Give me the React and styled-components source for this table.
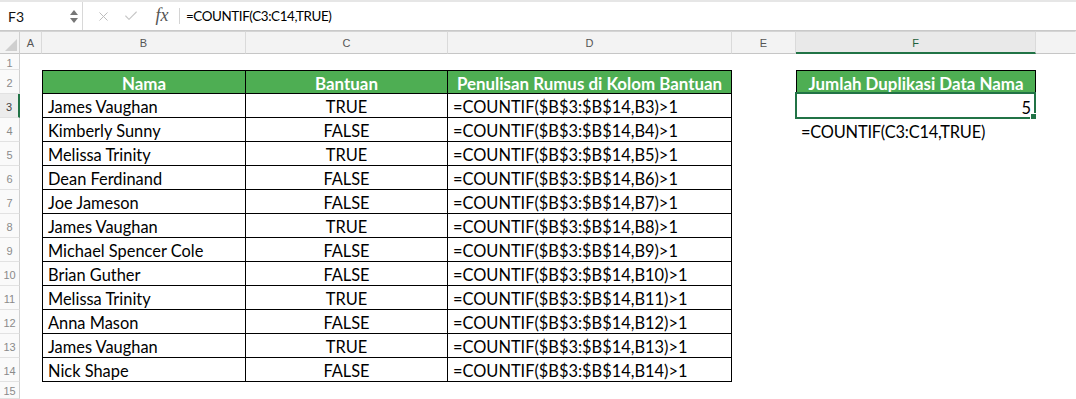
import React from "react";
import styled, { createGlobalStyle, css } from "styled-components";
import { X, Check } from "lucide-react";

const Global = createGlobalStyle`
  html, body { margin: 0; padding: 0; background: #fff; }
  body { font-family: Lato, "Liberation Sans", sans-serif; overflow: hidden; }
  * { box-sizing: border-box; }
`;

const Page = styled.div`
  width: 1076px;
  height: 399px;
  overflow: hidden;
  background: #fff;
  display: flex;
  flex-direction: column;
`;

const FormulaBar = styled.div`
  height: 31px;
  flex: none;
  display: flex;
  align-items: center;
  border-top: 2px solid #e6e6e6;
  border-bottom: 1px solid #c9c9c9;
  background: #fff;
`;

const NameBox = styled.div`
  width: 83px;
  height: 100%;
  display: flex;
  align-items: center;
  justify-content: space-between;
  padding: 0 4px 0 8px;
  border-right: 1px solid #d8d8d8;
  font-size: 14px;
  color: #111;
`;

const Spinner = styled.div`
  display: flex;
  flex-direction: column;
  gap: 3px;
  align-items: center;
`;

const BarButton = styled.div`
  width: 28px;
  display: flex;
  justify-content: center;
  align-items: center;
  color: ${(p) => p.$color || "#bdbdbd"};
`;

const Fx = styled.div`
  width: 34px;
  text-align: center;
  font-family: "Liberation Serif", "DejaVu Serif", serif;
  font-style: italic;
  font-size: 18px;
  color: #555;
  padding-bottom: 2px;
`;

const BarSep = styled.div`
  width: 1px;
  height: 16px;
  background: #d4d4d4;
  margin-right: 6px;
`;

const FormulaText = styled.div`
  font-size: 13.4px;
  letter-spacing: -0.4px;
  color: #000;
`;

const Sheet = styled.div`
  flex: 1;
  display: grid;
  grid-template-columns: 20px 22px 204px 202px 284px 64px 240px 1fr;
  grid-template-rows: 23px 16px repeat(13, 24px) 1fr;
`;

const Corner = styled.div`
  position: relative;
  background: #f3f3f3;
  border-top: 1px solid #d4d4d4;
  border-right: 1px solid #d0d0d0;
  border-bottom: 1px solid #c6c6c6;
  display: flex;
  align-items: flex-end;
  justify-content: flex-end;
  padding: 0 2px 2px 0;
`;

const ColHeader = styled.div`
  background: ${(p) => (p.$active ? "#e9e9e9" : "#f3f3f3")};
  border-top: 1px solid #d4d4d4;
  border-right: 1px solid ${(p) => (p.$last ? "transparent" : "#dadada")};
  border-bottom: ${(p) => (p.$active ? "2px solid #217346" : "1px solid #c6c6c6")};
  display: flex;
  align-items: center;
  justify-content: center;
  font-family: "Liberation Sans", sans-serif;
  font-size: 11px;
  color: ${(p) => (p.$active ? "#1e5f3b" : "#555")};
  padding-top: 1px;
`;

const RowHeader = styled.div`
  background: ${(p) => (p.$active ? "#ececec" : "#fafafa")};
  border-right: ${(p) => (p.$active ? "2px solid #217346" : "1px solid #d0d0d0")};
  border-bottom: 1px solid #e2e2e2;
  display: flex;
  align-items: center;
  justify-content: center;
  font-family: "Liberation Sans", sans-serif;
  font-size: 11px;
  color: ${(p) => (p.$active ? "#444" : "#8a8a8a")};
  padding-top: 2px;
`;

const Cell = styled.div`
  position: relative;
  display: flex;
  align-items: center;
  justify-content: ${(p) => (p.$align === "center" ? "center" : p.$align === "right" ? "flex-end" : "flex-start")};
  padding: 2px 5px 0 5px;
  font-size: 16.4px;
  color: #000;
  white-space: nowrap;
  ${(p) =>
    p.$table &&
    css`
      border-right: 1px solid #000;
      border-bottom: 1px solid #000;
    `}
  ${(p) => p.$first && css`border-left: 1px solid #000;`}
  ${(p) => p.$top && css`border-top: 1px solid #000;`}
  ${(p) =>
    p.$head &&
    css`
      background: #4eae53;
      color: #fff;
      font-weight: 700;
      font-size: 16.9px;
    `}
`;

const Selection = styled.div`
  position: absolute;
  top: -2px;
  left: -1px;
  right: 0;
  bottom: -1px;
  border: 2px solid #217346;
  pointer-events: none;
`;

const FillHandle = styled.div`
  position: absolute;
  right: -3px;
  bottom: -3px;
  width: 5px;
  height: 5px;
  background: #217346;
  border: 1px solid #fff;
  box-sizing: content-box;
`;

const Overflow = styled.span`
  position: relative;
  z-index: 1;
  letter-spacing: -0.2px;
`;

const rows = [
  ["James Vaughan", "TRUE"],
  ["Kimberly Sunny", "FALSE"],
  ["Melissa Trinity", "TRUE"],
  ["Dean Ferdinand", "FALSE"],
  ["Joe Jameson", "FALSE"],
  ["James Vaughan", "TRUE"],
  ["Michael Spencer Cole", "FALSE"],
  ["Brian Guther", "FALSE"],
  ["Melissa Trinity", "TRUE"],
  ["Anna Mason", "FALSE"],
  ["James Vaughan", "TRUE"],
  ["Nick Shape", "FALSE"],
];

const cols = ["A", "B", "C", "D", "E", "F", ""];

export default function App() {
  const cells = [];
  cells.push(
    <Corner key="corner">
      <svg width="12" height="12" viewBox="0 0 12 12">
        <polygon points="12,0 12,12 0,12" fill="#cfcfcf" />
      </svg>
    </Corner>
  );
  cols.forEach((c, i) =>
    cells.push(
      <ColHeader key={"h" + i} $active={c === "F"} $last={i === cols.length - 1}>
        {c}
      </ColHeader>
    )
  );

  cells.push(<RowHeader key="r1">1</RowHeader>);
  for (let i = 0; i < 7; i++) cells.push(<Cell key={"1-" + i} />);

  cells.push(<RowHeader key="r2">2</RowHeader>);
  cells.push(<Cell key="2-a" />);
  cells.push(<Cell key="2-b" $table $head $first $top $align="center">Nama</Cell>);
  cells.push(<Cell key="2-c" $table $head $top $align="center">Bantuan</Cell>);
  cells.push(<Cell key="2-d" $table $head $top $align="center">Penulisan Rumus di Kolom Bantuan</Cell>);
  cells.push(<Cell key="2-e" />);
  cells.push(<Cell key="2-f" $table $head $first $top $align="center">Jumlah Duplikasi Data Nama</Cell>);
  cells.push(<Cell key="2-g" />);

  rows.forEach(([name, val], idx) => {
    const r = idx + 3;
    cells.push(
      <RowHeader key={"r" + r} $active={r === 3}>
        {r}
      </RowHeader>
    );
    cells.push(<Cell key={r + "-a"} />);
    cells.push(<Cell key={r + "-b"} $table $first>{name}</Cell>);
    cells.push(<Cell key={r + "-c"} $table $align="center">{val}</Cell>);
    cells.push(<Cell key={r + "-d"} $table>{`=COUNTIF($B$3:$B$14,B${r})>1`}</Cell>);
    cells.push(<Cell key={r + "-e"} />);
    if (r === 3) {
      cells.push(
        <Cell key={r + "-f"} $align="right">
          5
          <Selection>
            <FillHandle />
          </Selection>
        </Cell>
      );
    } else if (r === 4) {
      cells.push(
        <Cell key={r + "-f"}>
          <Overflow>=COUNTIF(C3:C14,TRUE)</Overflow>
        </Cell>
      );
    } else {
      cells.push(<Cell key={r + "-f"} />);
    }
    cells.push(<Cell key={r + "-g"} />);
  });

  cells.push(<RowHeader key="r15">15</RowHeader>);
  for (let i = 0; i < 7; i++) cells.push(<Cell key={"15-" + i} />);

  return (
    <Page>
      <Global />
      <FormulaBar>
        <NameBox>
          F3
          <Spinner>
            <svg width="8" height="5" viewBox="0 0 8 5">
              <polygon points="4,0 8,5 0,5" fill="#777" />
            </svg>
            <svg width="8" height="5" viewBox="0 0 8 5">
              <polygon points="0,0 8,0 4,5" fill="#777" />
            </svg>
          </Spinner>
        </NameBox>
        <BarButton style={{ marginLeft: 6 }}>
          <X size={15} strokeWidth={1.6} />
        </BarButton>
        <BarButton $color="#c6c6c6">
          <Check size={16} strokeWidth={1.6} />
        </BarButton>
        <Fx>fx</Fx>
        <BarSep />
        <FormulaText>=COUNTIF(C3:C14,TRUE)</FormulaText>
      </FormulaBar>
      <Sheet>{cells}</Sheet>
    </Page>
  );
}
